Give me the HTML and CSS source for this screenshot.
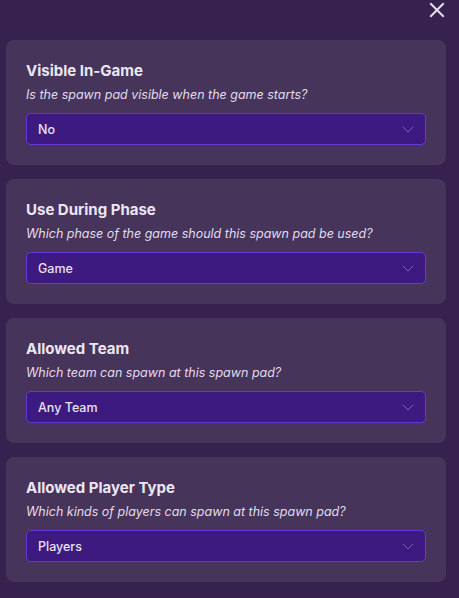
FILE: index.html
```html
<!DOCTYPE html>
<html>
<head>
<meta charset="utf-8">
<link rel="stylesheet" href="styles.css">
</head>
<body>
<div class="page">
  <div class="topbar">
    <svg class="close" width="16" height="16" viewBox="0 0 16 16"><path d="M2 2 L14 14 M14 2 L2 14" stroke="#e4dfec" stroke-width="2" stroke-linecap="square"/></svg>
  </div>
  <div class="list">
    <div class="card">
      <div class="title">Visible In-Game</div>
      <div class="desc">Is the spawn pad visible when the game starts?</div>
      <div class="select"><span>No</span><svg class="chev" width="12" height="7" viewBox="0 0 12 7"><path d="M1 1 L6 6 L11 1" fill="none" stroke="#7d5fb0" stroke-width="1"/></svg></div>
    </div>
    <div class="card">
      <div class="title">Use During Phase</div>
      <div class="desc">Which phase of the game should this spawn pad be used?</div>
      <div class="select"><span>Game</span><svg class="chev" width="12" height="7" viewBox="0 0 12 7"><path d="M1 1 L6 6 L11 1" fill="none" stroke="#7d5fb0" stroke-width="1"/></svg></div>
    </div>
    <div class="card">
      <div class="title">Allowed Team</div>
      <div class="desc">Which team can spawn at this spawn pad?</div>
      <div class="select"><span>Any Team</span><svg class="chev" width="12" height="7" viewBox="0 0 12 7"><path d="M1 1 L6 6 L11 1" fill="none" stroke="#7d5fb0" stroke-width="1"/></svg></div>
    </div>
    <div class="card">
      <div class="title">Allowed Player Type</div>
      <div class="desc">Which kinds of players can spawn at this spawn pad?</div>
      <div class="select"><span>Players</span><svg class="chev" width="12" height="7" viewBox="0 0 12 7"><path d="M1 1 L6 6 L11 1" fill="none" stroke="#7d5fb0" stroke-width="1"/></svg></div>
    </div>
  </div>
</div>
</body>
</html>
```
FILE: styles.css
```css
html, body {
  margin: 0;
  padding: 0;
  background: #37214e;
  font-family: Inter, "Noto Sans", sans-serif;
  color: #ece8f2;
}
.page {
  width: 459px;
  height: 598px;
  overflow: hidden;
}
.topbar {
  height: 40px;
  display: flex;
  justify-content: flex-end;
  align-items: flex-start;
  padding-right: 14px;
  padding-top: 2px;
  box-sizing: border-box;
}
.close {
  display: block;
}
.list {
  display: flex;
  flex-direction: column;
  gap: 14px;
  padding-left: 6px;
  width: 440px;
}
.card {
  background: #46345b;
  border-radius: 8px;
  padding: 22px 20px 20px 20px;
  height: 125px;
  box-sizing: border-box;
}
.title {
  font-size: 15px;
  font-weight: 700;
  line-height: 18px;
  color: #ebe6f1;
}
.desc {
  font-size: 12.5px;
  font-style: italic;
  line-height: 18px;
  margin-top: 6px;
  color: #e2dcea;
}
.select {
  margin-top: 9px;
  height: 32px;
  box-sizing: border-box;
  border: 1px solid #6a35d9;
  border-radius: 5px;
  background: #3d1a7f;
  display: flex;
  align-items: center;
  justify-content: space-between;
  padding: 0 11px 0 11px;
  font-size: 12.5px;
  font-weight: 500;
  color: #e8e2f2;
}
.chev {
  display: block;
}
```
